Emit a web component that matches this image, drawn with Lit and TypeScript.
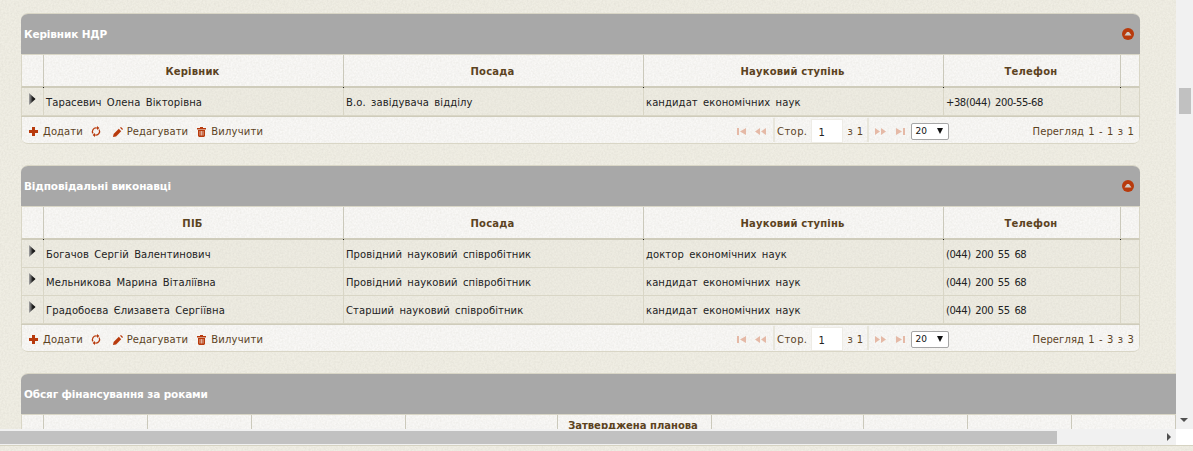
import { LitElement, html, css, svg } from "lit";
import { customElement } from "lit/decorators.js";

const RUST = "#b83a0c";
const icon = (w: number, h: number, body: unknown, cls = "") =>
  html`<svg class="ic ${cls}" width=${w} height=${h} viewBox="0 0 ${w} ${h}">${body}</svg>`;

const plus = () => icon(9, 9, svg`<path d="M3 0h3v3h3v3H6v3H3V6H0V3h3z" fill=${RUST}/>`);
const refresh = () =>
  icon(10, 11, svg`<path d="M2 7.5A3.6 3.6 0 0 1 5.5 2H7M8 3.5A3.6 3.6 0 0 1 4.5 9H3" fill="none" stroke=${RUST} stroke-width="1.2"/><path d="M6 0l2.4 2L6 4zM4 7L1.6 9 4 11z" fill=${RUST}/>`);
const pencil = () =>
  icon(10, 10, svg`<path d="M0 10l.6-3L5.8 1.8l2.4 2.4L3 9.4z" fill=${RUST}/><path d="M7 .8L8 0l2 2-.8 1z" fill=${RUST}/>`);
const trash = () =>
  icon(9, 10, svg`<path d="M0 1h3V0h3v1h3v1.5H0z" fill=${RUST}/><path d="M1 3h7v6l-1 1H2L1 9z" fill=${RUST}/><path d="M3 4v4.5M4.5 4v4.5M6 4v4.5" stroke="#f0e4dc" stroke-width=".7"/>`);
const tri = () =>
  html`<svg class="tri" width="7" height="12" viewBox="0 0 7 12"><defs><linearGradient id="g" x1="0" x2="1" y1="0" y2="0"><stop offset="0" stop-color="#a8a8a8"/><stop offset=".55" stop-color="#222"/><stop offset="1" stop-color="#000"/></linearGradient></defs><path d="M0 0l6.5 6L0 12z" fill="url(#g)"/></svg>`;

const seek = (d: string, w: number) =>
  icon(w, 7, svg`<path d=${d} fill="#e5b9a6"/>`);
const first = () => seek("M0 0h2v7H0zM9 0v7L3 3.5z", 9);
const prev = () => seek("M0 3.5L5 0v7zM6 3.5L11 0v7z", 11);
const next = () => seek("M0 0l5 3.5L0 7zM6 0l5 3.5L6 7z", 11);
const last = () => seek("M0 0l6 3.5L0 7zM7 0h2v7H7z", 9);

const collapse = () =>
  html`<svg class="coll" width="12" height="12" viewBox="0 0 12 12"><circle cx="6" cy="6" r="6" fill=${RUST}/><path d="M2.5 7.5L5 4h2l2.5 3.5z" fill="#d0cac4"/></svg>`;

interface Grid {
  title: string;
  heads: string[];
  rows: string[][];
  total: string;
}

const grids: Grid[] = [
  {
    title: "Керівник НДР",
    heads: ["Керівник", "Посада", "Науковий ступінь", "Телефон"],
    rows: [["Тарасевич Олена Вікторівна", "В.о. завідувача відділу", "кандидат економічних наук", "+38(044) 200-55-68"]],
    total: "Перегляд 1 - 1 з 1",
  },
  {
    title: "Відповідальні виконавці",
    heads: ["ПІБ", "Посада", "Науковий ступінь", "Телефон"],
    rows: [
      ["Богачов Сергій Валентинович", "Провідний науковий співробітник", "доктор економічних наук", "(044) 200 55 68"],
      ["Мельникова Марина Віталіївна", "Провідний науковий співробітник", "кандидат економічних наук", "(044) 200 55 68"],
      ["Градобоєва Єлизавета Сергіївна", "Старший науковий співробітник", "кандидат економічних наук", "(044) 200 55 68"],
    ],
    total: "Перегляд 1 - 3 з 3",
  },
];

const wideHeads = ["", "", "", "", "Затверджена планова", "", "", "", ""];

const noise = `url("data:image/svg+xml,%3Csvg xmlns='http://www.w3.org/2000/svg' width='200' height='200'%3E%3Cfilter id='n'%3E%3CfeTurbulence type='fractalNoise' baseFrequency='.55' numOctaves='2'/%3E%3CfeColorMatrix values='0 0 0 0 .45 0 0 0 0 .44 0 0 0 0 .38 0 0 0 .28 -.08'/%3E%3C/filter%3E%3Crect width='200' height='200' filter='url(%23n)'/%3E%3C/svg%3E")`;

@customElement("app-root")
export class AppRoot extends LitElement {
  static styles = css`
    :host {
      display: block;
      height: 451px;
      overflow: hidden;
      background-color: #f0eee4;
      background-image: var(--noise);
      font-family: "DejaVu Sans", Verdana, sans-serif;
      font-size: 10px;
      color: #222;
    }
    .top { display: flex; height: 429px; }
    .content { flex: 1; min-width: 0; overflow: hidden; padding: 13px 0 0 21px; box-sizing: border-box; }
    .vbar { width: 17px; background: #f1f1f1; position: relative; flex: none; }
    .vthumb { width: 12px; height: 26px; background: #c1c1c1; margin: 88px 0 0 3px; }
    .varrow { position: absolute; left: 4px; bottom: 7px; width: 0; height: 0;
      border-left: 4px solid transparent; border-right: 4px solid transparent; border-top: 4px solid #505050; }
    .hbar { display: flex; height: 16px; background: #f1f1f1; border-bottom: 1px solid #d6d3c2; }
    .htrack { flex: 1; position: relative; padding-top: 1px; }
    .hthumb { width: 1057px; height: 13px; margin-top: 1px; background: #c1c1c1; }
    .harrow { position: absolute; right: 5px; top: 4px; width: 0; height: 0;
      border-top: 4px solid transparent; border-bottom: 4px solid transparent; border-left: 4px solid #505050; }
    .corner { width: 17px; background: #fff; }

    .panel { width: 1119px; margin-bottom: 21px; border-top: 1px solid #d9d6c6; border-bottom: 1px solid #d9d6c6; border-radius: 7px; box-sizing: border-box; overflow: hidden; }
    .panel.wide { width: 1300px; border-radius: 7px 0 0 0; margin: 0; }
    .title { height: 40px; padding: 0 6px 0 3px; background: #a8a8a8; color: #fff; font-weight: bold; font-size: 10.5px; letter-spacing: -.13px;
      display: flex; align-items: center; justify-content: space-between; border-bottom: 1px solid #d9d6c6; }

    .cols, .row, .pager, .wcols { box-sizing: border-box; border-left: 1px solid #d9d6c6; border-right: 1px solid #d9d6c6; }
    .cols, .row { display: grid; grid-template-columns: 22px 300px 300px 300px 177px 18px; }
    .cols { height: 33px; background-color: #f9f8f6; background-image: var(--noise); border-bottom: 2px solid #cfccbb; color: #5c431f; font-weight: bold; letter-spacing: .2px; }
    .hcell { display: flex; align-items: center; justify-content: center; padding: 1px 2px 0 0; border-right: 1px solid #cbc9bb; position: relative; min-width: 0; }
    .hcell:last-child { border-right: 0; }
    .hcell:not(:last-child)::after { content: ""; position: absolute; right: -1px; bottom: -2px; width: 1px; height: 1px; background: #222; }
    .row { height: 28px; border-bottom: 1px solid #d9d6c6; background-color: #eeece2; background-image: var(--noise); }
    .cell { display: flex; align-items: center; padding: 1px 0 0 2px; border-right: 1px solid #d9d6c6; white-space: nowrap; overflow: hidden; letter-spacing: .1px; word-spacing: 2px; }
    .cell:last-child { border-right: 0; }
    .cell.exp { padding: 5px 0 0 7px; align-items: flex-start; }
    .cell.phone { letter-spacing: -.45px; }
    .rows { border-bottom: 1px solid #cfccbb; }

    .pager { height: 26px; background-color: #f9f8f6; background-image: var(--noise); display: grid;
      grid-template-columns: 715px auto 1fr; align-items: center; color: #5c431f; }
    .actions { display: flex; align-items: center; padding: 3px 0 0 7px; letter-spacing: .07px; }
    .act { display: flex; align-items: center; gap: 5px; }
    .act + .act { margin-left: 8px; }
    .act.edit { margin-left: 12px; gap: 4px; }
    .act.del { margin-left: 9px; letter-spacing: .2px; }
    .nav { display: flex; align-items: center; height: 26px; }
    .nav .ic { flex: none; position: relative; top: 1px; }
    .sep { width: 2px; height: 24px; background: #e8e6dc; }
    .gap2 { width: 2px; } .gap3 { width: 3px; } .gap4 { width: 4px; } .gap6 { width: 6px; }
    .gap7 { width: 7px; } .gap9 { width: 9px; } .gap10 { width: 10px; }
    .lbl { letter-spacing: .4px; position: relative; top: 1.5px; }
    .inp { width: 32px; height: 24px; margin-top: 2px; background: #fff; box-sizing: border-box; color: #222; padding: 7px 0 0 6px; font-size: 10px; line-height: 12px; border: 1px solid #eeece6; }
    .sel { width: 38px; height: 17px; box-sizing: border-box; border: 1px solid #a6a6a6; border-radius: 2px; background: #fff; color: #111; display: flex; align-items: center; justify-content: space-between; padding: 0 5px 0 4px; font-size: 9px; position: relative; top: 1px; }
    .sel i { width: 0; height: 0; border-left: 3.5px solid transparent; border-right: 3.5px solid transparent; border-top: 6px solid #111; }
    .total { text-align: right; padding: 3px 5px 0 0; letter-spacing: .1px; word-spacing: 1px; }

    .wcols { display: grid; grid-template-columns: 22px 104px 104px 154px 152px 154px 152px 104px 104px 104px 200px; height: 32px; background-color: #f9f8f6; background-image: var(--noise); color: #5c431f; font-weight: bold; }
    .wcols div { border-right: 1px solid #cbc9bb; text-align: center; padding: 5px 3px 0 0; white-space: nowrap; overflow: hidden; }
  `;

  connectedCallback() {
    super.connectedCallback();
    this.style.setProperty("--noise", noise);
  }

  private grid(g: Grid) {
    return html`<section class="panel">
      <div class="title"><span>${g.title}</span>${collapse()}</div>
      <div class="cols">
        <div class="hcell"></div>
        ${g.heads.map((h) => html`<div class="hcell">${h}</div>`)}
        <div class="hcell"></div>
      </div>
      <div class="rows">
        ${g.rows.map(
          (r) => html`<div class="row">
            <div class="cell exp">${tri()}</div>
            ${r.map((c, i) => html`<div class="cell ${i === 3 ? "phone" : ""}">${c}</div>`)}
            <div class="cell"></div>
          </div>`
        )}
      </div>
      <div class="pager">
        <div class="actions">
          <span class="act">${plus()}Додати</span>
          <span class="act">${refresh()}</span>
          <span class="act edit">${pencil()}Редагувати</span>
          <span class="act del">${trash()}Вилучити</span>
        </div>
        <div class="nav">
          ${first()}<span class="gap9"></span>${prev()}<span class="gap7"></span>
          <span class="sep"></span><span class="gap2"></span>
          <span class="lbl">Стор.</span><span class="gap4"></span>
          <span class="inp">1</span><span class="gap4"></span>
          <span class="lbl">з 1</span><span class="gap3"></span>
          <span class="sep"></span><span class="gap6"></span>
          ${next()}<span class="gap10"></span>${last()}<span class="gap6"></span>
          <span class="sel">20<i></i></span>
        </div>
        <div class="total">${g.total}</div>
      </div>
    </section>`;
  }

  render() {
    return html`
      <div class="top">
        <div class="content">
          ${grids.map((g) => this.grid(g))}
          <section class="panel wide">
            <div class="title"><span>Обсяг фінансування за роками</span></div>
            <div class="wcols">
              <div></div>
              ${wideHeads.map((h) => html`<div>${h}</div>`)}
              <div></div>
            </div>
          </section>
        </div>
        <div class="vbar"><div class="vthumb"></div><div class="varrow"></div></div>
      </div>
      <div class="hbar">
        <div class="htrack"><div class="hthumb"></div><div class="harrow"></div></div>
        <div class="corner"></div>
      </div>
    `;
  }
}
